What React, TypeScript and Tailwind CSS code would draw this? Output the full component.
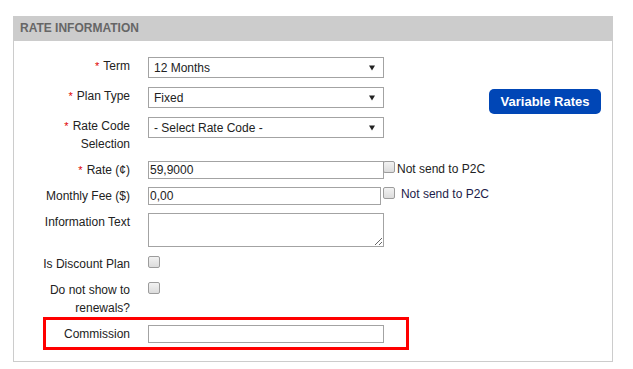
import React from "react";

const font = { fontFamily: '"Liberation Sans", Arial, sans-serif' };

function Req() {
  return <span className="text-[#e00000] text-[11px] mr-[4px]">*</span>;
}

function Label({ children, w = "w-[134px]" }: { children: React.ReactNode; w?: string }) {
  return (
    <div className={`${w} shrink-0 pr-[18px] text-right text-[12px] leading-[18px] text-[#222]`}>
      {children}
    </div>
  );
}

function Select({ value }: { value: string }) {
  return (
    <div className="w-[236px] h-[21px] border border-[#a3a3a3] bg-white flex items-center justify-between pl-[5px] pr-[8px] text-[12px] text-[#222]">
      <span>{value}</span>
      <svg width="6" height="6" viewBox="0 0 6 6">
        <path d="M0 0.5H6L3 5.5Z" fill="#222" />
      </svg>
    </div>
  );
}

function Input({ value = "" }: { value?: string }) {
  return (
    <div className="w-[236px] h-[18px] border border-[#a3a3a3] bg-white pl-[1px] text-[12px] leading-[16px] text-[#222]">
      {value}
    </div>
  );
}

function Check({ cls = "" }: { cls?: string }) {
  return (
    <div
      className={`w-[12px] h-[12px] shrink-0 rounded-[2px] border border-[#9c9c9c] bg-gradient-to-b from-[#f2f2f2] to-[#dcdcdc] ${cls}`}
    />
  );
}

export default function App() {
  return (
    <div className="w-[633px] h-[369px] bg-white" style={font}>
      <div className="ml-[13px] pt-[16px]">
        <div className="w-[600px] h-[346px] border border-[#cccccc] border-t-0">
          <div className="h-[25px] bg-[#cccccc] pl-[6px] text-[12px] leading-[25px] font-bold text-[#666] uppercase">
            Rate Information
          </div>
          <div className="flex pt-[16px]">
            <div className="w-[475px] shrink-0 flex flex-col">
              <div className="flex">
                <Label>
                  <Req />Term
                </Label>
                <Select value="12 Months" />
              </div>
              <div className="flex mt-[9px]">
                <Label>
                  <Req />Plan Type
                </Label>
                <Select value="Fixed" />
              </div>
              <div className="flex mt-[9px] h-[36px]">
                <Label>
                  <Req />Rate Code
                  <br />
                  Selection
                </Label>
                <Select value="- Select Rate Code -" />
              </div>
              <div className="flex mt-[8px] items-start">
                <Label>
                  <Req />Rate (¢)
                </Label>
                <Input value="59,9000" />
                <Check cls="ml-[-1px]" />
                <span className="ml-[2px] text-[12px] leading-[16px] text-[#222] whitespace-nowrap">
                  Not send to P2C
                </span>
              </div>
              <div className="flex mt-[8px] items-start">
                <Label>Monthly Fee ($)</Label>
                <Input value="0,00" />
                <Check cls="ml-[2px]" />
                <span className="ml-[6px] text-[12px] leading-[14px] text-[#1c1c4a] whitespace-nowrap">
                  Not send to P2C
                </span>
              </div>
              <div className="flex mt-[8px] items-start">
                <Label>Information Text</Label>
                <textarea
                  readOnly
                  className="w-[236px] h-[34px] border border-[#a3a3a3] bg-white block outline-none"
                />
              </div>
              <div className="flex mt-[8px] items-start">
                <Label>Is Discount Plan</Label>
                <Check cls="mt-[1px]" />
              </div>
              <div className="flex mt-[8px] items-start">
                <Label>
                  Do not show to
                  <br />
                  renewals?
                </Label>
                <Check cls="mt-[1px]" />
              </div>
              <div className="ml-[29px] w-[366px] h-[33px] border-[3px] border-[#ff0000] flex items-start pt-[5px]">
                <Label w="w-[102px]">Commission</Label>
                <Input />
              </div>
            </div>
            <div className="mt-[32px] w-[112px] h-[25px] rounded-[5px] bg-[#0046b6] text-white text-[13px] font-bold flex items-center justify-center">
              Variable Rates
            </div>
          </div>
        </div>
      </div>
    </div>
  );
}
